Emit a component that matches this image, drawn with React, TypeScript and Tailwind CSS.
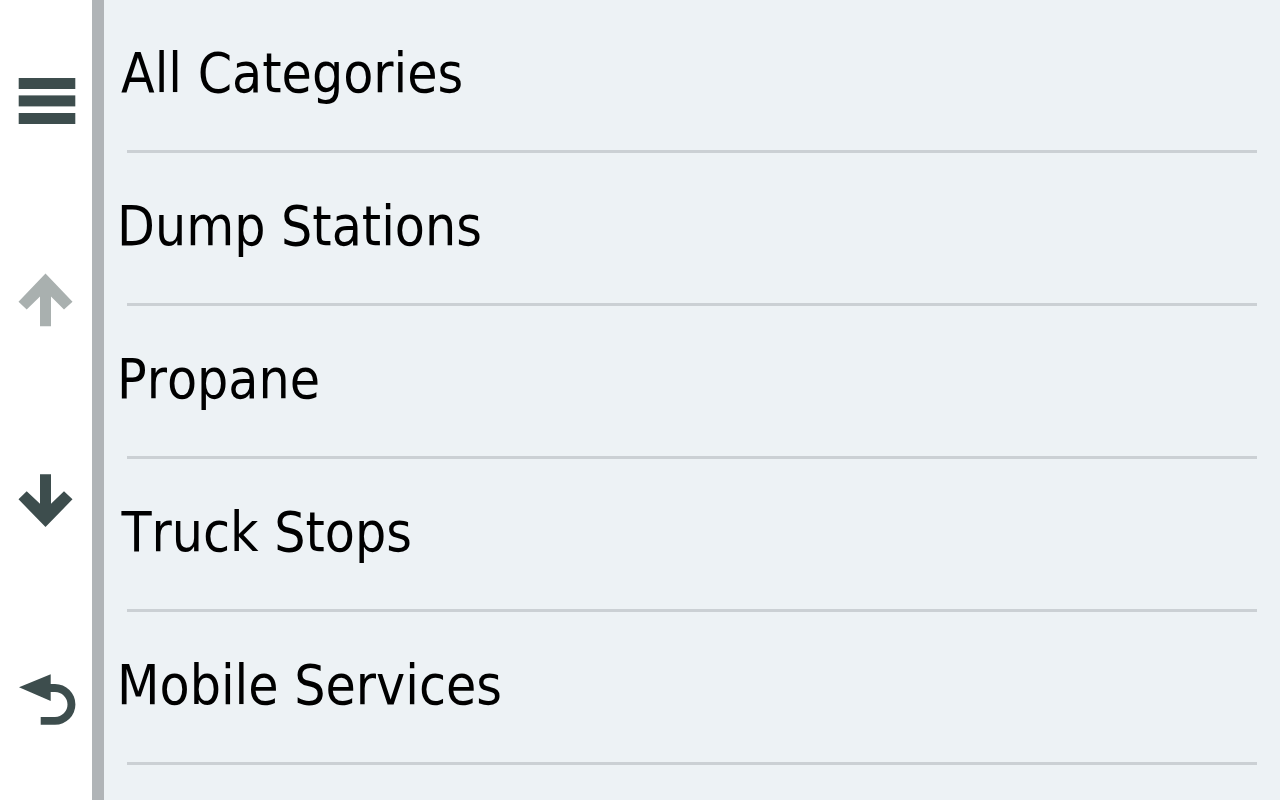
const rows = [
  { label: "All Categories", pad: "pl-[17px]" },
  { label: "Dump Stations", pad: "pl-[13px]" },
  { label: "Propane", pad: "pl-[13px]" },
  { label: "Truck Stops", pad: "pl-[17.5px]" },
  { label: "Mobile Services", pad: "pl-[13px]" },
];

function MenuIcon() {
  return (
    <svg width="60" height="60" viewBox="0 0 60 60" className="fill-[#3d4d4d]">
      <rect x="2.7" y="8" width="56.6" height="11" />
      <rect x="2.7" y="25.4" width="56.6" height="11" />
      <rect x="2.7" y="43" width="56.6" height="11" />
    </svg>
  );
}

function UpIcon() {
  return (
    <svg width="60" height="60" viewBox="0 0 60 60" className="fill-[#a9b0af]">
      <path d="M29.5 3.5 L56.5 31.7 L48 39.5 L35 26.5 V56.3 H24 V26.5 L10.7 39.5 L2.5 31.7 Z" />
    </svg>
  );
}

function DownIcon() {
  return (
    <svg width="60" height="60" viewBox="0 0 60 60" className="fill-[#3d4d4d]">
      <path d="M29.5 57 L56.5 29.3 L48 21.2 L35 33.8 V4.3 H24 V33.8 L10.7 21.2 L2.5 29.3 Z" />
    </svg>
  );
}

function BackIcon() {
  return (
    <svg width="60" height="60" viewBox="0 0 60 60" className="fill-[#3d4d4d]">
      <path d="M3 17.3 L34.7 4.3 V14 H39 A20.4 20.4 0 0 1 39 54.8 H24.7 V47 H39 A12.5 12.5 0 0 0 39 22 H34.7 V31 Z" />
    </svg>
  );
}

export default function App() {
  return (
    <div className="flex h-[800px] w-[1280px] overflow-hidden bg-white font-['DejaVu_Sans',sans-serif]">
      {/* Side buttons */}
      <div className="flex w-[92px] shrink-0 flex-col">
        <div className="flex h-[200px] items-center justify-center"><MenuIcon /></div>
        <div className="flex h-[200px] items-center justify-center"><UpIcon /></div>
        <div className="flex h-[200px] items-center justify-center"><DownIcon /></div>
        <div className="flex h-[200px] items-center justify-center"><BackIcon /></div>
      </div>
      <div className="w-[12px] shrink-0 bg-[#b0b4b7]" />

      {/* Category list */}
      <div className="flex-1 bg-[#edf2f5] pr-[23px]">
        {rows.map((row) => (
          <div key={row.label} className="flex h-[153px] flex-col">
            <div className={`flex flex-1 items-center ${row.pad} pb-[3px] text-[54.75px] leading-none text-black [font-kerning:none] [font-stretch:condensed]`}>
              {row.label}
            </div>
            <div className="ml-[23px] h-[3px] bg-[#cbd0d4]" />
          </div>
        ))}
      </div>
    </div>
  );
}
